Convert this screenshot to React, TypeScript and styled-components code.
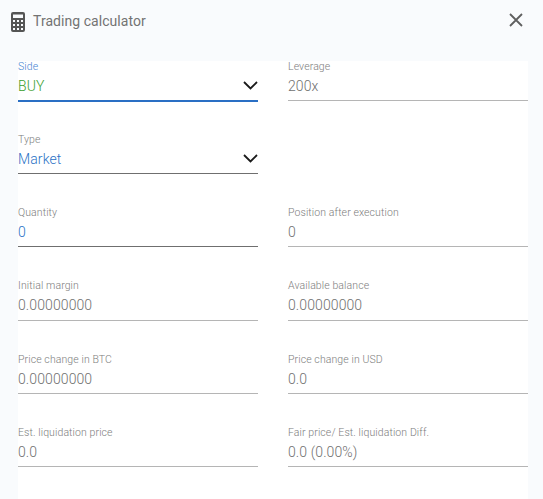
import React from "react";
import styled, { createGlobalStyle } from "styled-components";

const Global = createGlobalStyle`
  html, body { margin: 0; padding: 0; height: 100%; background: #f9fbfd; }
  body { font-family: Roboto, "Liberation Sans", sans-serif; overflow: hidden; }
`;

const Dialog = styled.div`
  width: 543px;
  height: 499px;
  display: flex;
  flex-direction: column;
  box-sizing: border-box;
  padding: 0 15px 0 18px;
`;

const Header = styled.header`
  height: 60.6px;
  flex: none;
  display: flex;
  align-items: flex-start;
  padding-top: 12px;
  box-sizing: border-box;
  margin-left: -7px;
`;

const Title = styled.h1`
  margin: -1px 0 0 8px;
  font-size: 14px;
  line-height: 20px;
  font-weight: 400;
  color: #737373;
  letter-spacing: 0.05px;
  flex: 1;
`;

const CloseButton = styled.button`
  border: 0;
  background: none;
  padding: 0;
  width: 16px;
  height: 16px;
  margin: 0 4px 0 0;
  display: flex;
`;

const Form = styled.main`
  flex: 1;
  background: #fff;
  display: grid;
  grid-template-columns: 240px 240px;
  column-gap: 30px;
  grid-auto-rows: 73.25px;
  align-content: start;
`;

const Field = styled.div<{ $line: "muted" | "dark" | "active" }>`
  height: 39.2px;
  display: flex;
  flex-direction: column;
  position: relative;
  border-bottom: ${(p) =>
    p.$line === "active" ? "2px solid #2a6fc4" : p.$line === "dark" ? "1px solid #6f6f6f" : "1px solid #b5b5b5"};
`;

const Label = styled.label<{ $active?: boolean }>`
  font-size: 10.5px;
  line-height: 11px;
  font-weight: 300;
  letter-spacing: 0.1px;
  color: ${(p) => (p.$active ? "#3f84d2" : "#7d7d7d")};
`;

const Value = styled.div<{ $tone?: "buy" | "blue" }>`
  margin-top: 4px;
  font-size: 14px;
  line-height: 20px;
  font-weight: 300;
  letter-spacing: 0.1px;
  color: ${(p) => (p.$tone === "buy" ? "#3a9e2a" : p.$tone === "blue" ? "#2a72c6" : "#707070")};
`;

const Chevron = styled.svg`
  position: absolute;
  right: 0;
  top: 20px;
  width: 15px;
  height: 9px;
`;

const Arrow = () => (
  <Chevron viewBox="0 0 15 9" fill="none" stroke="#1a1a1a" strokeWidth="1.8">
    <path d="M1 1l6.5 6.5L14 1" />
  </Chevron>
);

const Calculator = () => (
  <svg width="14" height="20" viewBox="0 0 14 20">
    <path
      fillRule="evenodd"
      fill="#555"
      d="M2 0h10a2 2 0 0 1 2 2v16a2 2 0 0 1-2 2H2a2 2 0 0 1-2-2V2a2 2 0 0 1 2-2zM2 2.5v3.5h10V2.5zM2 8v2h2V8zM6 8v2h2V8zM10 8v2h2V8zM2 12v2h2v-2zM6 12v2h2v-2zM10 12v2h2v-2zM2 16v2h2v-2zM6 16v2h2v-2zM10 16v2h2v-2z"
    />
  </svg>
);

type Item = {
  label: string;
  value: string;
  line?: "muted" | "dark" | "active";
  tone?: "buy" | "blue";
  select?: boolean;
  activeLabel?: boolean;
};

const items: (Item | null)[] = [
  { label: "Side", value: "BUY", line: "active", tone: "buy", select: true, activeLabel: true },
  { label: "Leverage", value: "200x" },
  { label: "Type", value: "Market", line: "dark", tone: "blue", select: true },
  null,
  { label: "Quantity", value: "0", line: "dark", tone: "blue" },
  { label: "Position after execution", value: "0" },
  { label: "Initial margin", value: "0.00000000" },
  { label: "Available balance", value: "0.00000000" },
  { label: "Price change in BTC", value: "0.00000000" },
  { label: "Price change in USD", value: "0.0" },
  { label: "Est. liquidation price", value: "0.0" },
  { label: "Fair price/ Est. liquidation Diff.", value: "0.0 (0.00%)" },
];

export default function App() {
  return (
    <Dialog>
      <Global />
      <Header>
        <Calculator />
        <Title>Trading calculator</Title>
        <CloseButton aria-label="Close">
          <svg width="16" height="16" viewBox="0 0 16 16" fill="none" stroke="#5f5f5f" strokeWidth="1.8">
            <path d="M2 2l12 12M14 2L2 14" />
          </svg>
        </CloseButton>
      </Header>
      <Form>
        {items.map((item, i) =>
          item ? (
            <Field key={i} $line={item.line ?? "muted"}>
              <Label $active={item.activeLabel}>{item.label}</Label>
              <Value $tone={item.tone}>{item.value}</Value>
              {item.select && <Arrow />}
            </Field>
          ) : (
            <div key={i} />
          )
        )}
      </Form>
    </Dialog>
  );
}
